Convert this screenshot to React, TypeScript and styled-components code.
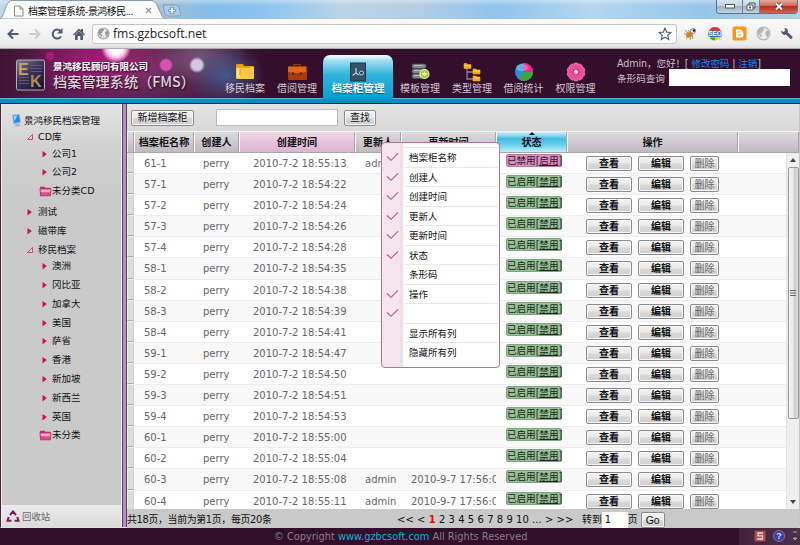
import React from "react";
import styled, { createGlobalStyle, css } from "styled-components";

const UI = `"DejaVu Sans", "Noto Sans CJK SC", sans-serif`;
const CJK = `"Noto Sans CJK SC", sans-serif`;

const Global = createGlobalStyle`
  * { box-sizing: border-box; }
  body { margin: 0; background: #32102a; overflow: hidden; }
`;

const Window = styled.div`
  width: 800px;
  height: 545px;
  display: flex;
  flex-direction: column;
  overflow: hidden;
  font: 9.6px/14px ${UI};
  color: #111;
  white-space: nowrap;
  background: #32102a;
`;

/* ---------- browser frame ---------- */
const TitleBar = styled.div`
  height: 19px;
  flex: none;
  display: flex;
  align-items: flex-start;
  background:
    linear-gradient(rgba(255, 255, 255, 0.35), rgba(255, 255, 255, 0) 30%),
    linear-gradient(90deg, #c3d9ee 0, #a9bfd3 20%, #85bdea 26%, #8cc4ee 33%, #bcd3e6 43%, #b4cde4 52%, #8fc4ec 62%, #b4d6f0 74%, #94c6ea 88%, #b8cfdf);
`;
const Tab = styled.div`
  position: relative;
  width: 166px;
  height: 19px;
  display: flex;
  align-items: center;
  padding: 2px 0 0 14px;
`;
const TabShape = styled.svg`
  position: absolute;
  left: 0;
  top: 0;
`;
const TabTitle = styled.span`
  position: relative;
  margin-left: 4px;
  width: 117px;
  font: 9.9px/14px ${CJK};
  letter-spacing: -0.4px;
  color: #111;
`;
const TabIcon = styled.svg`
  position: relative;
  flex: none;
`;
const NewTab = styled.svg`
  margin: 4px 0 0 -4px;
  position: relative;
`;
const WinButtons = styled.div`
  margin-left: auto;
  margin-right: 2px;
  display: flex;
  height: 14px;
  border: 1px solid #62727f;
  border-top: 0;
  border-radius: 0 0 4px 4px;
  overflow: hidden;
`;
const WinButton = styled.div<{ $w: number; $close?: boolean }>`
  width: ${(p) => p.$w}px;
  display: flex;
  align-items: center;
  justify-content: center;
  border-right: ${(p) => (p.$close ? 0 : "1px solid #70808d")};
  background: ${(p) =>
    p.$close
      ? "linear-gradient(#e5a99c, #cf6651 45%, #b5301b 50%, #d0654e)"
      : "linear-gradient(#d8e5ef, #c3d3e0 45%, #9fb4c6 50%, #bfd3e3)"};
`;
const Toolbar = styled.div`
  height: 30px;
  flex: none;
  display: flex;
  align-items: center;
  padding-left: 7px;
  background: linear-gradient(#fafafa, #ececec 85%, #dedede);
  border-bottom: 1px solid #aaa;
  & > svg { flex: none; }
`;
const NavIcons = styled.div`
  display: flex;
  width: 85px;
  gap: 10px;
  align-items: center;
`;
const AddressBar = styled.div`
  width: 585px;
  height: 20px;
  display: flex;
  align-items: center;
  padding: 0 4px;
  border: 1px solid #c4c4c4;
  border-radius: 3px;
  background: #fff;
  font: 12.2px/18px "Open Sans", sans-serif;
  color: #222;
`;
const Url = styled.span`
  flex: 1;
  margin-left: 3px;
`;
const Extensions = styled.div`
  display: flex;
  align-items: center;
  gap: 9px;
  margin-left: 6px;
`;

/* ---------- application header ---------- */
const Header = styled.header`
  height: 55px;
  flex: none;
  display: flex;
  border-bottom: 1px solid #0b2f44;
  box-shadow: inset 0 -4px #068fc2, inset 0 -5px #5bb9dc;
  background:
    radial-gradient(circle at 116px -1px, #fff 0 6px, #f4b8e3 10px, transparent 15px),
    radial-gradient(circle at 50px 7px, #a91b77 0 3px, transparent 5px),
    radial-gradient(circle at 166px 16px, #d653b0 0 5px, transparent 7px),
    radial-gradient(circle at 197px 16px, #cfc8e0 0 5px, rgba(190, 170, 210, 0.5) 7px, transparent 8px),
    radial-gradient(ellipse 38px 32px at 226px 26px, rgba(66, 98, 150, 0.85), transparent),
    radial-gradient(ellipse 46px 30px at 200px 6px, rgba(150, 120, 150, 0.55), transparent),
    radial-gradient(ellipse 75px 42px at 100px 12px, rgba(175, 25, 125, 0.9), transparent),
    radial-gradient(ellipse 90px 40px at 145px 20px, rgba(120, 60, 110, 0.8), transparent),
    linear-gradient(90deg, #3e1434, #561d49 60px, #4a1c40 200px, #330f2b 270px);
`;
const Brand = styled.div`
  width: 219px;
  display: flex;
  padding: 10px 0 0 15px;
`;
const BrandText = styled.div`
  margin-left: 7px;
  padding-top: 1px;
  color: #fff;
  text-shadow: 1px 1px 2px #1a0716;
`;
const Company = styled.div`
  font: bold 9.6px/13px ${CJK};
  letter-spacing: -0.1px;
`;
const Product = styled.div`
  font: 500 14.2px/17px ${CJK};
  color: #ddd5dc;
`;
const Nav = styled.nav`
  display: flex;
  width: 398px;
`;
const NavItem = styled.div<{ $w: number; $active?: boolean }>`
  width: ${(p) => p.$w}px;
  height: 44px;
  margin-top: 6px;
  padding-top: 7px;
  display: flex;
  flex-direction: column;
  align-items: center;
  font: 10px/13px ${CJK};
  color: #d5c9d2;
  & > svg { flex: none; }
  & > span { margin-top: -1px; }
  ${(p) =>
    p.$active &&
    css`
      border-radius: 7px 7px 0 0;
      background: linear-gradient(#fff, #a5dff2 12%, #2fb3dd 45%, #079fd2);
      color: #fff;
      font-weight: bold;
      font-size: 10.6px;
      text-shadow: 0 1px 1px #05516e;
    `}
`;
const Account = styled.div`
  padding-top: 7px;
  color: #cdbfc9;
  font: 9.6px/15px ${UI};
`;
const AccountRow = styled.div<{ $tight?: boolean }>`
  display: flex;
  align-items: center;
  height: 15px;
  letter-spacing: ${(p) => (p.$tight ? "-0.12px" : "0")};
`;
const TopLink = styled.span`
  color: #0d8bea;
`;
const BarcodeInput = styled.div`
  width: 121px;
  height: 17px;
  margin: 0 0 2px 4px;
  background: #fff;
`;

/* ---------- body ---------- */
const Body = styled.div`
  height: 424px;
  flex: none;
  display: flex;
  border-left: 1px solid #4a2140;
  border-bottom: 1px solid #e6dfe4;
`;
const Sidebar = styled.aside`
  width: 121px;
  display: flex;
  flex-direction: column;
  border-left: 1px solid #eee;
  background: linear-gradient(#e4e4e4, #d2d2d2 40px, #cacaca 90px);
`;
const Splitter = styled.div`
  width: 5px;
  border: solid #633b68;
  border-width: 0 1px;
  background: #b291be;
  box-shadow: -1px 0 #efefef;
`;
const Tree = styled.div`
  flex: 1;
  padding-top: 8px;
`;
const TreeRow = styled.div<{ $level: number; $gap: number }>`
  display: flex;
  align-items: center;
  height: 16px;
  margin-top: ${(p) => p.$gap}px;
  padding-left: ${(p) => [9, 23, 38, 37][p.$level]}px;
  font: 9.5px/14px ${UI};
  color: #111;
  & > svg { flex: none; margin-right: ${(p) => [2, 5, 4, 0][p.$level]}px; }
`;
const Recycle = styled.div`
  height: 22px;
  display: flex;
  align-items: center;
  padding-left: 4px;
  gap: 2px;
  background: linear-gradient(#ececec, #dadada);
  color: #666;
  font: 9.4px/14px ${CJK};
`;
const Content = styled.main`
  position: relative;
  width: 673px;
  display: flex;
  flex-direction: column;
  background: #d9d9d9;
  border-right: 1px solid #c9c3c8;
  box-shadow: inset 1px 0 #eee;
`;
const Actions = styled.div`
  height: 27px;
  flex: none;
  display: flex;
  align-items: center;
  padding-left: 4px;
  background: linear-gradient(#e4e4e4, #d8d8d8);
`;
const Field = styled.div`
  width: 122px;
  height: 17px;
  margin: 0 6px 0 22px;
  border: 1px solid #bbb;
  background: #fff;
`;
const Button = styled.button<{ $w: number; $bold?: boolean; $dim?: boolean }>`
  flex: none;
  width: ${(p) => p.$w}px;
  height: 15px;
  padding: 0;
  border: 1px solid #8b8b8b;
  border-radius: 2px;
  box-shadow: inset 0 0 0 1px #f6f6f6;
  background: linear-gradient(#f4f4f4, #e8e8e8 48%, #d9d9d9 52%, #cfcfcf);
  font: ${(p) => (p.$bold ? "bold" : "normal")} 10px/13px ${UI};
  color: ${(p) => (p.$dim ? "#666" : "#111")};
`;
const ToolButton = styled(Button)`
  height: 16px;
`;

/* ---------- grid ---------- */
const columns = css`
  display: grid;
  grid-template-columns: 7px 60px 45px 116px 46px 95px 71px 171px 61px;
`;
const HeadRow = styled.div`
  ${columns}
  flex: none;
  height: 22px;
  border-top: 1px solid #f3f3f3;
  border-bottom: 1px solid #aaa5aa;
`;
const Head = styled.div<{ $tone?: "pink" | "blue" }>`
  position: relative;
  display: flex;
  align-items: center;
  justify-content: center;
  padding-top: 1px;
  border-left: 1px solid #f8f8f8;
  border-right: 1px solid #a9a4a9;
  font: bold 10.1px/14px ${UI};
  color: #111;
  background: ${(p) =>
    p.$tone === "pink"
      ? "linear-gradient(#f0dbe9, #e9c4de 45%, #dbb5cf)"
      : p.$tone === "blue"
        ? "linear-gradient(#d5f2fb, #43bce2 35%, #6bd0ec 65%, #bdeefa)"
        : "linear-gradient(#dddbdd, #cecacf 50%, #bfbabf)"};
`;
const SortMark = styled.svg`
  position: absolute;
  top: 0;
  left: 32px;
`;
const GridBody = styled.div`
  height: 356px;
  flex: none;
  display: flex;
  background: #fff;
`;
const Rows = styled.div`
  width: 659px;
  overflow: hidden;
`;
const Row = styled.div<{ $alt: boolean }>`
  ${columns}
  height: 21.1px;
  border-bottom: 1px solid #ededed;
  background: ${(p) => (p.$alt ? "#f8f8f8" : "#fff")};
  color: #666;
  font: 10px/22px ${UI};
`;
const Handle = styled.div`
  background: #dcdcdc;
  border-left: 1px solid #f2f2f2;
  border-right: 1px solid #cfcfcf;
  border-bottom: 1px solid #aaa;
`;
const Cell = styled.div<{ $left: number }>`
  height: 20px;
  padding-left: ${(p) => p.$left}px;
  overflow: hidden;
`;
const UpdatedCell = styled(Cell)`
  margin-right: 0;
`;
const Badge = styled.div<{ $off: boolean }>`
  width: 56px;
  height: 13px;
  margin: 1px 0 0 10px;
  border-radius: 2px;
  background: ${(p) => (p.$off ? "#d98cc0" : "#94c294")};
  border: 1px solid ${(p) => (p.$off ? "#b979a5" : "#80a480")};
  font: 9.6px/11px ${UI};
  letter-spacing: -0.05px;
  color: #222;
  & > u { text-underline-offset: 1px; }
`;
const RowActions = styled.div`
  display: flex;
  gap: 6px;
  padding: 3px 0 0 19px;
`;
const ScrollBar = styled.div`
  width: 13px;
  display: flex;
  flex-direction: column;
  align-items: center;
  background: #efefef;
  border-left: 1px solid #e2e2e2;
`;
const Arrow = styled.svg`
  flex: none;
  margin: 5px 0 5px;
`;
const Thumb = styled.div`
  width: 11px;
  height: 252px;
  display: flex;
  align-items: center;
  justify-content: center;
  border: 1px solid #999;
  border-radius: 2px;
  background: linear-gradient(90deg, #f5f5f5, #e6e6e6 50%, #c9c9c9 55%, #ddd);
  margin-bottom: auto;
`;

const Pager = styled.div`
  flex: 1;
  display: flex;
  align-items: center;
  padding: 3px 0 0 0;
  background: #c9c9c9;
  font: 9.9px/14px ${UI};
`;
const PageInfo = styled.span`
  width: 270px;
  letter-spacing: -0.32px;
`;
const Pages = styled.div`
  width: 185px;
  font-size: 10px;
  word-spacing: 0.1px;
  & > b { color: #f00; }
`;
const PageField = styled.div`
  width: 26px;
  height: 16px;
  padding-left: 3px;
  background: #fff;
  line-height: 16px;
`;
const Go = styled(Button)`
  height: 16px;
  margin-left: 3px;
  font: 10.5px/13px "Liberation Sans", sans-serif;
`;

/* ---------- column menu ---------- */
const Menu = styled.div`
  position: absolute;
  left: 254px;
  top: 38px;
  width: 119px;
  height: 226px;
  padding: 4px 1px 0 0;
  border: 1px solid #b5748f;
  border-radius: 4px;
  background: linear-gradient(90deg, #f5e4ee 0 17px, #ecdce6 21px, #fff 21px);
`;
const MenuItem = styled.div`
  display: flex;
  align-items: center;
  height: 19.55px;
  font: 9.5px/14px ${CJK};
  color: #111;
`;
const CheckSlot = styled.div`
  width: 23px;
  height: 100%;
  padding: 4px 0 0 4px;
`;
const MenuLabel = styled.div`
  flex: 1;
  height: 100%;
  padding: 2px 0 0 4px;
  border-top: 1px solid #e8e8e8;
`;

const Footer = styled.footer`
  flex: 1;
  display: flex;
  align-items: center;
  justify-content: flex-end;
  font: 9.8px/14px ${UI};
  color: #8d7b89;
`;
const Copyright = styled.div`
  width: 465px;
  & > span { color: #10b0df; }
`;
const Tray = styled.div`
  width: 61px;
  height: 100%;
  display: flex;
  align-items: center;
  gap: 7px;
  padding: 0 0 2px 15px;
  background: linear-gradient(90deg, #40223a, #4d3148);
`;

/* ---------- drawings ---------- */
const Triangle = ({ open }: { open?: boolean }) => (
  <svg width="8" height="8" viewBox="0 0 8 8">
    {open ? <path d="M7.500 1.500V6.500H2.500Z" fill="#f3c6d6" stroke="#d3346b" strokeWidth=".9" /> : <path d="M2.500 1L6.800 4L2.500 7.500Z" fill="#d80b50" />}
  </svg>
);
const PinkFolder = () => (
  <svg width="13" height="12" viewBox="0 0 12 11">
    <path d="M1 1.500h4l1 1h4.500v7H1z" fill="#b52b68" />
    <path d="M.8 3.500h10.400l-.7 6.500h-9z" fill="#dc4c8c" stroke="#b32b66" strokeWidth=".6" />
    <path d="M1.500 4.200h9l-.3 2.400H1.800z" fill="#f5a8c9" />
  </svg>
);
const Monitor = () => (
  <svg width="11" height="13" viewBox="0 0 10 13">
    <path d="M1 1l7-.5 1 8-7 1z" fill="#3487d4" stroke="#9cc5e8" strokeWidth=".8" />
    <path d="M2 2l4-.5-3 5.500z" fill="#9fd8ff" />
    <ellipse cx="6" cy="11" rx="3" ry="1.400" fill="#a9b3d6" />
  </svg>
);
const Logo = () => (
  <svg width="31" height="33" viewBox="0 0 31 33">
    <defs>
      <linearGradient id="logoFace" x1="0" y1="0" x2="0.7" y2="1">
        <stop offset="0" stopColor="#827a8c" />
        <stop offset=".5" stopColor="#3c3359" />
        <stop offset="1" stopColor="#1b153d" />
      </linearGradient>
    </defs>
    <rect x="1.500" y="1" width="28" height="30" rx="1.500" fill="url(#logoFace)" stroke="#b6afb8" strokeWidth="1" />
    <path d="M16 6.500h11M16 9.500h11M16 12.500h11M4 18.500h10M4 21.500h10M4 24.500h10" stroke="#6e6184" strokeWidth=".8" />
    <text x="3" y="16" fontFamily="Liberation Sans" fontWeight="bold" fontSize="16" fill="#c6a26a">E</text>
    <text x="15" y="28" fontFamily="Liberation Sans" fontWeight="bold" fontSize="16" fill="#b58a4d">K</text>
  </svg>
);
const Check = () => (
  <svg width="13" height="12" viewBox="0 0 13 12">
    <path d="M1 5.500L5 9.300L12 2.300" fill="none" stroke="#b05a7e" strokeWidth="1.100" />
  </svg>
);
const Globe = ({ size = 13, dark = "#9a9a9a" }) => (
  <svg width={size} height={size} viewBox="0 0 13 13">
    <circle cx="6.5" cy="6.5" r="5.5" fill="#ececec" stroke={dark} strokeWidth="1.1" />
    <path d="M3 2.2l3-.7 1.400 1.200-1.500 1.600L5 6 3.200 6.200 5 7.500 4.500 10 2.200 7.500 1.300 5zM8 5l2.500-1.500 1.300 3L9.800 10 8.500 8z" fill={dark} />
  </svg>
);

const navIcons = [
  <svg width="20" height="20" viewBox="0 0 20 20" key="a">
    <path d="M1 3q0-1 1-1h6l1 2h9q1 0 1 1v11H1z" fill="#f49a12" />
    <path d="M1 6h14l2-1h2v11q0 1-1 1H2q-1 0-1-1z" fill="#ffc83a" /><path d="M2 6h3v10H2z" fill="#ffe08a" /><path d="M5 7v6" stroke="#f28b16" />
  </svg>,
  <svg width="20" height="20" viewBox="0 0 20 20" key="b">
    <rect x="1" y="4" width="19" height="14" rx="1" fill="#a83a0c" /><path d="M7 4V2.500h6V4" fill="none" stroke="#a03a10" strokeWidth="1.200" />
    <path d="M1 5h18v5l-6 1H7l-6-1z" fill="#e0661d" /><circle cx="6" cy="11.500" r="1.200" fill="#5a1c06" /><circle cx="14" cy="11.500" r="1.200" fill="#5a1c06" />
  </svg>,
  <svg width="20" height="20" viewBox="0 0 20 20" key="c">
    <rect x="2.500" y="1" width="15" height="18" fill="#31546b" stroke="#20394a" />
    <path d="M8 6v5L4.500 13.500M8 11l3 2" stroke="#b9cad5" strokeWidth="1.400" fill="none" /><circle cx="13.500" cy="11" r="2" fill="#26404f" stroke="#c6d5de" />
  </svg>,
  <svg width="20" height="20" viewBox="0 0 20 20" key="d">
    {[2, 7, 12].map((y) => <g key={y}><rect x="2" y={y} width="14" height="4.500" rx="2" fill="#7d8688" stroke="#4a5153" strokeWidth=".7" /><path d={`M4 ${y + 1.500}h9`} stroke="#c5cccd" strokeWidth=".8" /></g>)}
    <circle cx="14.500" cy="12" r="4.500" fill="#a3cf1e" stroke="#e8f4b8" strokeWidth="1.200" /><path d="M14.500 9.800v4.400M12.300 12h4.400" stroke="#fff" strokeWidth="1.300" />
  </svg>,
  <svg width="20" height="20" viewBox="0 0 20 20" key="e">
    <path d="M5 5v12h7M5 10h7" stroke="#8a8190" strokeWidth="1.300" fill="none" />
    <path d="M2 1.500h3l1 1h3v4H2zM11 7h3l1 1h3v4h-7zM11 14h3l1 1h3v4h-7z" fill="#f9a912" stroke="#f9a912" strokeWidth=".6" /><path d="M2.500 3.500h6M11.500 9h6M11.500 16h6" stroke="#ffdc73" />
  </svg>,
  <svg width="20" height="20" viewBox="0 0 20 20" key="f">
    <circle cx="10" cy="10" r="9" fill="#2b8fd8" /><path d="M10 10V1a9 9 0 0 1 9 9z" fill="#f02f83" /><path d="M10 10h9a9 9 0 0 1-14.500 7z" fill="#3fa63a" />
    <ellipse cx="8" cy="5.500" rx="6" ry="3.500" fill="#fff" opacity=".3" />
  </svg>,
  <svg width="20" height="20" viewBox="0 0 20 20" key="g">
    {[0, 36, 72, 108, 144].map((a) => <rect key={a} x="7.800" y="1" width="4.400" height="18" rx="1" fill="#f0529f" stroke="#f9b8d8" strokeWidth=".4" transform={`rotate(${a} 10 10)`} />)}
    <circle cx="10" cy="10" r="7" fill="#ee4a9c" /><circle cx="10" cy="10" r="2.700" fill="#fbd5e8" stroke="#c02873" />
  </svg>,
];
const navItems: [string, number][] = [
  ["移民档案", 52], ["借阅管理", 52], ["档案柜管理", 70], ["模板管理", 54], ["类型管理", 50], ["借阅统计", 53], ["权限管理", 51],
];

type Kind = "root" | "open" | "closed" | "folder";
const tree: [string, Kind, number, number][] = [
  ["景鸿移民档案管理", "root", 0, 0.5],
  ["CD库", "open", 1, 0.5],
  ["公司1", "closed", 2, 0.5],
  ["公司2", "closed", 2, 2.5],
  ["未分类CD", "folder", 3, 2.5],
  ["测试", "closed", 1, 5.5],
  ["磁带库", "closed", 1, 3],
  ["移民档案", "open", 1, 2.5],
  ["澳洲", "closed", 2, 0.7],
  ["冈比亚", "closed", 2, 2.8],
  ["加拿大", "closed", 2, 2.8],
  ["美国", "closed", 2, 2.8],
  ["萨省", "closed", 2, 2.8],
  ["香港", "closed", 2, 2.8],
  ["新加坡", "closed", 2, 2.8],
  ["新西兰", "closed", 2, 2.8],
  ["英国", "closed", 2, 2.8],
  ["未分类", "folder", 3, 2.5],
];
const treeIcon = (k: Kind) => (k === "root" ? <Monitor /> : k === "folder" ? <PinkFolder /> : <Triangle open={k === "open"} />);

const rows: [string, string][] = [
  ["61-1", "55:13"], ["57-1", "54:22"], ["57-2", "54:24"], ["57-3", "54:26"], ["57-4", "54:28"], ["58-1", "54:35"],
  ["58-2", "54:38"], ["58-3", "54:39"], ["58-4", "54:41"], ["59-1", "54:47"], ["59-2", "54:50"], ["59-3", "54:51"],
  ["59-4", "54:53"], ["60-1", "55:00"], ["60-2", "55:04"], ["60-3", "55:08"], ["60-4", "55:11"],
];
const adminRows = ["61-1", "60-3", "60-4"];
const datedRows = ["60-3", "60-4"];
const menu: [string, boolean][] = [
  ["档案柜名称", true], ["创建人", true], ["创建时间", true], ["更新人", true], ["更新时间", true], ["状态", true],
  ["条形码", false], ["操作", true], ["", true], ["显示所有列", false], ["隐藏所有列", false],
];

export default function App() {
  return (
    <Window>
      <Global />
      <TitleBar>
        <Tab>
          <TabShape width="166" height="19"><path d="M0 19C4 17 5 5 9 2Q10 .5 13 .5H151Q154 .5 156 3L162 16Q163 18.500 166 19Z" fill="#fafafa" stroke="#8c9aa8" /></TabShape>
          <TabIcon width="10" height="12" viewBox="0 0 10 12"><path d="M.5 1h5.500l3 3v7H.5zM6 1v3h3" fill="#fff" stroke="#888" /></TabIcon>
          <TabTitle>档案管理系统-景鸿移民...</TabTitle>
          <TabIcon width="7" height="7" viewBox="0 0 7 7"><path d="M1 1l5 5M6 1L1 6" stroke="#999" strokeWidth="1.200" /></TabIcon>
        </Tab>
        <NewTab width="20" height="13" viewBox="0 0 20 13">
          <path d="M1 1h13q2 0 3 2l2 7q0 2-2 2H6q-2 0-3-2z" fill="#a9cbe8" stroke="#7d9db8" /><path d="M10 3v7M6.500 6.500h7" stroke="#5a7e9e" strokeWidth="3.200" /><path d="M10 3.500v6M7 6.500h6" stroke="#fff" strokeWidth="1.700" />
        </NewTab>
        <WinButtons>
          <WinButton $w={26}><svg width="10" height="5"><rect x=".5" y=".5" width="9" height="3.500" fill="#fff" stroke="#555" /></svg></WinButton>
          <WinButton $w={17}><svg width="10" height="9"><path d="M3 1h6v5H3z" fill="#ddd" stroke="#555" /><path d="M1 3h6v5H1z" fill="#fff" stroke="#555" /><rect x="3" y="4.500" width="2" height="2" fill="#555" /></svg></WinButton>
          <WinButton $w={37} $close><svg width="10" height="9"><path d="M2 1.500l6 6M8 1.500l-6 6" stroke="#6d3028" strokeWidth="3.400" /><path d="M2 1.500l6 6M8 1.500l-6 6" stroke="#fff" strokeWidth="2" /></svg></WinButton>
        </WinButtons>
      </TitleBar>
      <Toolbar>
        <NavIcons>
          <svg width="12" height="12" viewBox="0 0 12 12"><path d="M11.500 6H2M6 1.500L1.500 6L6 10.500" fill="none" stroke="#4d5a72" strokeWidth="2" /></svg>
          <svg width="12" height="12" viewBox="0 0 12 12"><path d="M.5 6H10M6 1.500L10.500 6L6 10.500" fill="none" stroke="#ccc" strokeWidth="2" /></svg>
          <svg width="12" height="12" viewBox="0 0 12 12"><path d="M9.500 3A4.500 4.500 0 1 0 10 8.500" fill="none" stroke="#4d5a72" strokeWidth="2" /><path d="M11.500 0v5.500H6z" fill="#4d5a72" /></svg>
          <svg width="12" height="12" viewBox="0 0 12 12"><path d="M0 6.500L6 .5L8 2.500V1h2v3.500l2 2-1 1-5-5-5 5zM2 7l4-4 4 4v5H7.300V8H4.700v4H2z" fill="#4d5a72" /></svg>
        </NavIcons>
        <AddressBar>
          <Globe />
          <Url>fms.gzbcsoft.net</Url>
          <svg width="14" height="14" viewBox="0 0 14 14"><path d="M7 1.200l1.700 3.900 4.200.4-3.200 2.800 1 4.200L7 10.300l-3.700 2.200 1-4.200L1.100 5.500l4.200-.4z" fill="#fff" stroke="#59667c" strokeWidth="1.200" /></svg>
        </AddressBar>
        <Extensions>
          <svg width="15" height="14" viewBox="0 0 15 14"><path d="M2 3l3 3M1 7h4M3 12l3-3M7 13l1-4M10 12L9 8M5 3l2 3" stroke="#9b5a2a" strokeWidth=".7" /><ellipse cx="6.500" cy="7.500" rx="3.800" ry="2.600" fill="#d9822e" transform="rotate(-35 6.500 7.500)" /><circle cx="10" cy="4" r="2.500" fill="#eee" stroke="#555" strokeWidth=".6" /><circle cx="11" cy="3.500" r="1.300" fill="#222" /></svg>
          <svg width="16" height="14" viewBox="0 0 16 14"><circle cx="8" cy="7" r="6.500" fill="#f7ca2c" /><path d="M2 4a6.500 6.500 0 0 1 12 0z" fill="#d9392b" /><path d="M2.500 10.500a6.500 6.500 0 0 0 5 3l1-3z" fill="#3ba647" /><rect x="1" y="3.700" width="14" height="6.300" rx="2" fill="#3f74c9" /><text x="8" y="9.300" fontSize="6.500" fontWeight="bold" textAnchor="middle" fontFamily="Liberation Sans" fill="#fff">SEO</text></svg>
          <svg width="15" height="15" viewBox="0 0 15 15"><rect x=".5" y=".5" width="14" height="14" rx="2" fill="#f79518" /><path d="M4 3.500h4q2.500 0 2.500 2.500 0 .7 1 .7V9q0 2.500-2.500 2.500H4z" fill="#fff" /><path d="M6 6h2.300M6 9h3" stroke="#f79518" strokeWidth="1.200" /></svg>
          <Globe size={15} dark="#b5b5b5" />
          <svg width="13" height="13" viewBox="0 0 13 13"><path d="M1 3.500L3.500 5 5 4 4.500 1Q7.500 1 8 4l-.3 1.300 4.800 4.500q.5 2-1.800 2.400L6 7.600Q2 9 1 3.500z" fill="#4f5c73" /></svg>
        </Extensions>
      </Toolbar>
      <Header>
        <Brand>
          <Logo />
          <BrandText>
            <Company>景鸿移民顾问有限公司</Company>
            <Product>档案管理系统（FMS）</Product>
          </BrandText>
        </Brand>
        <Nav>
          {navItems.map(([label, w], i) => (
            <NavItem key={label} $w={w} $active={i === 2}>
              {navIcons[i]}
              <span>{label}</span>
            </NavItem>
          ))}
        </Nav>
        <Account>
          <AccountRow $tight>Admin，您好！[&nbsp;<TopLink>修改密码</TopLink>&nbsp;|&nbsp;<TopLink>注销</TopLink>]</AccountRow>
          <AccountRow>条形码查询<BarcodeInput /></AccountRow>
        </Account>
      </Header>
      <Body>
        <Sidebar>
          <Tree>
            {tree.map(([label, kind, level, gap]) => (
              <TreeRow key={label} $level={level} $gap={gap}>
                {treeIcon(kind)}
                {label}
              </TreeRow>
            ))}
          </Tree>
          <Recycle>
            <svg width="14" height="13" viewBox="0 0 14 13"><path d="M4 5L7 1.500l3 3.500M11.300 7l1.200 3.700H8.500M5.500 10.700H1.500L2.700 7" fill="none" stroke="#7a1c5c" strokeWidth="2" /></svg>
            回收站
          </Recycle>
        </Sidebar>
        <Splitter />
        <Content>
          <Actions>
            <ToolButton $w={63}>新增档案柜</ToolButton>
            <Field />
            <ToolButton $w={32}>查找</ToolButton>
          </Actions>
          <HeadRow>
            <Head />
            <Head>档案柜名称</Head>
            <Head>创建人</Head>
            <Head $tone="pink">创建时间</Head>
            <Head>更新人</Head>
            <Head>更新时间</Head>
            <Head $tone="blue"><SortMark width="6" height="3"><path d="M0 3L3 0L6 3Z" fill="#111" /></SortMark>状态</Head>
            <Head>操作</Head>
            <Head />
          </HeadRow>
          <GridBody>
            <Rows>
              {rows.map(([id, time], i) => (
                <Row key={id} $alt={i % 2 === 1}>
                  <Handle />
                  <Cell $left={10}>{id}</Cell>
                  <Cell $left={9}>perry</Cell>
                  <Cell $left={14}>2010-7-2 18:{time}</Cell>
                  <Cell $left={10}>{adminRows.includes(id) ? "admin" : ""}</Cell>
                  <UpdatedCell $left={10}>{datedRows.includes(id) ? "2010-9-7 17:56:08" : ""}</UpdatedCell>
                  <Badge $off={i === 0}>{i === 0 ? "已禁用" : "已启用"}[<u>{i === 0 ? "启用" : "禁用"}</u>]</Badge>
                  <RowActions>
                    <Button $w={46} $bold>查看</Button>
                    <Button $w={46} $bold>编辑</Button>
                    <Button $w={29} $dim>删除</Button>
                  </RowActions>
                </Row>
              ))}
            </Rows>
            <ScrollBar>
              <Arrow width="6" height="4"><path d="M0 4L3 0L6 4Z" fill="#444" /></Arrow>
              <Thumb><svg width="6" height="6"><path d="M0 .5h6M0 3h6M0 5.500h6" stroke="#666" /></svg></Thumb>
              <Arrow width="6" height="4"><path d="M0 0L3 4L6 0Z" fill="#444" /></Arrow>
            </ScrollBar>
          </GridBody>
          <Pager>
            <PageInfo>共18页，当前为第1页，每页20条</PageInfo>
            <Pages>&lt;&lt; &lt; <b>1</b> 2 3 4 5 6 7 8 9 10 ... &gt; &gt;&gt;</Pages>
            转到
            <PageField>1</PageField>
            页
            <Go $w={24}>Go</Go>
          </Pager>
          <Menu>
            {menu.map(([label, checked], i) => (
              <MenuItem key={i}>
                <CheckSlot>{checked && <Check />}</CheckSlot>
                <MenuLabel>{label}</MenuLabel>
              </MenuItem>
            ))}
          </Menu>
        </Content>
      </Body>
      <Footer>
        <Copyright>© Copyright <span>www.gzbcsoft.com</span> All Rights Reserved</Copyright>
        <Tray>
          <svg width="12" height="12" viewBox="0 0 12 12"><rect x=".5" y=".5" width="11" height="11" rx="1" fill="#c95a5a" opacity=".75" /><path d="M9 3H4v2.800h4.500V9H3" fill="none" stroke="#ecd8dc" strokeWidth="1.300" /></svg>
          <svg width="12" height="12" viewBox="0 0 12 12"><circle cx="6" cy="6" r="5.500" fill="#403da0" stroke="#7774b8" /><text x="6" y="9.300" fontSize="9" fontWeight="bold" textAnchor="middle" fontFamily="Liberation Sans" fill="#ddd">?</text></svg>
          <svg width="6" height="12" viewBox="0 0 6 12"><path d="M1 2h4M1 8h4L3 10z" stroke="#a898a5" fill="#a898a5" /></svg>
        </Tray>
      </Footer>
    </Window>
  );
}
